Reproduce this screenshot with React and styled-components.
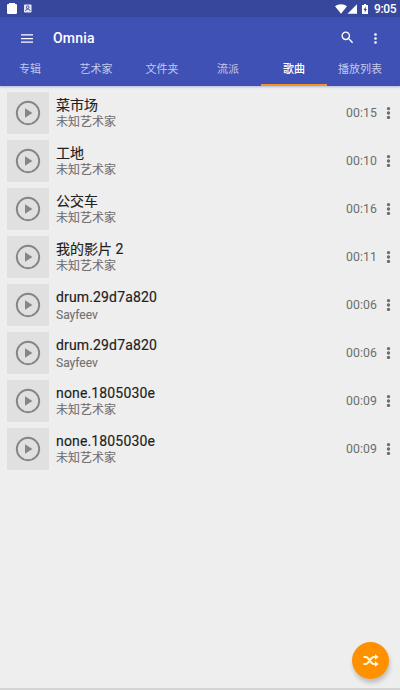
import React from 'react';
import styled, { createGlobalStyle } from 'styled-components';

const GlobalStyle = createGlobalStyle`
  * { box-sizing: border-box; }
  body { margin: 0; background: #eeeeee; font-family: Roboto, "Noto Sans CJK SC", sans-serif; }
  svg { display: block; flex: none; }
`;

const Screen = styled.div`
  width: 400px;
  height: 690px;
  display: flex;
  flex-direction: column;
  background: #eeeeee;
  overflow: hidden;
  border-bottom: 2px solid #d4d4d4;
`;

const StatusBar = styled.div`
  height: 17px;
  flex: none;
  display: flex;
  align-items: center;
  padding: 0 5px 0 7px;
  background: #37479b;
  color: #fff;
`;

const Notifications = styled.div`
  display: flex;
  align-items: center;
  gap: 7px;
  flex: 1;
`;

const Clock = styled.span`
  width: 21px;
  margin-left: 4px;
  font-size: 12px;
  font-weight: 500;
  letter-spacing: -0.35px;
  line-height: 17px;
  padding-top: 1px;
  white-space: nowrap;
`;

const Header = styled.header`
  height: 69px;
  flex: none;
  display: flex;
  flex-direction: column;
  background: #3f51b5;
  box-shadow: 0 1px 2px rgba(63, 81, 181, 0.35);
`;

const Toolbar = styled.div`
  height: 42px;
  display: flex;
  align-items: center;
  padding: 0 22px 0 21px;
  color: #fff;
`;

const AppTitle = styled.h1`
  flex: 1;
  margin: 0 0 0 20px;
  font-size: 14px;
  font-weight: 500;
  letter-spacing: 0.2px;
  line-height: 20px;
`;

const Actions = styled.div`
  display: flex;
  align-items: center;
  gap: 18px;
`;

const Tabs = styled.nav`
  height: 27px;
  display: flex;
  margin-left: -3px;
`;

const Tab = styled.div`
  width: 66px;
  flex: none;
  padding-top: 2px;
  text-align: center;
  font-size: 11px;
  line-height: 18px;
  font-weight: ${(p) => (p.$active ? 500 : 400)};
  color: ${(p) => (p.$active ? '#fff' : '#c3c9ec')};
  border-bottom: 2px solid ${(p) => (p.$active ? '#f39324' : 'transparent')};
`;

const List = styled.main`
  padding: 6px 8px 0 7px;
  display: flex;
  flex-direction: column;
  gap: 6px;
`;

const Row = styled.div`
  height: 42px;
  display: flex;
  align-items: center;
`;

const Artwork = styled.div`
  width: 42px;
  height: 42px;
  flex: none;
  display: grid;
  place-items: center;
  background: #e0e0e0;
`;

const Info = styled.div`
  flex: 1;
  margin-left: 7px;
  height: 42px;
  display: flex;
  flex-direction: column;
`;

const SongTitle = styled.div`
  margin-top: 4px;
  height: 18px;
  font-size: 14px;
  line-height: 18px;
  letter-spacing: ${(p) => (p.$latin ? '0.15px' : '0')};
  color: #212121;
  -webkit-text-stroke: 0.15px #212121;
  white-space: nowrap;
`;

const Artist = styled.div`
  margin-top: ${(p) => (p.$latin ? '1px' : '0')};
  height: 16px;
  font-size: 12px;
  line-height: 16px;
  color: #707070;
  -webkit-text-stroke: 0.1px #707070;
  white-space: nowrap;
`;

const Duration = styled.span`
  width: 32px;
  margin-right: 8px;
  text-align: right;
  font-size: 12.25px;
  letter-spacing: 0.1px;
  line-height: 16px;
  color: #6c6c6c;
`;

const Fab = styled.button`
  position: absolute;
  left: 352px;
  top: 642px;
  width: 37px;
  height: 37px;
  padding: 0;
  border: 0;
  border-radius: 50%;
  display: grid;
  place-items: center;
  background: #ff9100;
  box-shadow: 1px 4px 4px rgba(0, 0, 0, 0.2);
`;

const Dots = ({ w, h, r, gap, color }) => (
  <svg width={w} height={h} fill={color}>
    {[-gap, 0, gap].map((d) => (
      <circle key={d} cx={w / 2} cy={h / 2 + d} r={r} />
    ))}
  </svg>
);

const PlayIcon = () => (
  <svg width="26" height="26" viewBox="0 0 26 26">
    <circle cx="13" cy="13" r="11.2" fill="none" stroke="#858585" strokeWidth="1.9" />
    <path d="M10 8.2v9.6l7.4-4.8z" fill="#858585" />
  </svg>
);

const tabs = ['专辑', '艺术家', '文件夹', '流派', '歌曲', '播放列表'];

const songs = [
  ['菜市场', '未知艺术家', '00:15'],
  ['工地', '未知艺术家', '00:10'],
  ['公交车', '未知艺术家', '00:16'],
  ['我的影片 2', '未知艺术家', '00:11'],
  ['drum.29d7a820', 'Sayfeev', '00:06'],
  ['drum.29d7a820', 'Sayfeev', '00:06'],
  ['none.1805030e', '未知艺术家', '00:09'],
  ['none.1805030e', '未知艺术家', '00:09'],
];

const isLatin = (text) => /^[a-z]/i.test(text);

export default function App() {
  return (
    <Screen>
      <GlobalStyle />
      <StatusBar>
        <Notifications>
          <svg width="10" height="11" fill="#fff">
            <path d="M2 0h6v1h1.2l.8.8v8.4l-.8.8H.8l-.8-.8V1.8L.8 1H2z" />
          </svg>
          <svg width="8" height="9">
            <rect y="0.5" width="7.5" height="8" rx="0.8" fill="#e5e8f7" />
            <circle cx="3.7" cy="3.2" r="1.3" fill="none" stroke="#37479b" strokeWidth="0.9" />
            <path d="M1.5 7 2.5 5h2.3l1.4 2" fill="none" stroke="#37479b" strokeWidth="0.9" />
          </svg>
        </Notifications>
        <svg width="35" height="12" fill="#fff">
          <path d="M0 3.2C3.2.5 8.8.5 12 3.2L6 10.7z" />
          <path d="M22 1.2v9.5h-9.5z" />
          <path d="M29 1h2v1h2v9h-6V2h2z" />
          <path d="M30.7 3.4 28.5 7h1.3v2.6L32 6h-1.3z" fill="#37479b" />
        </svg>
        <Clock>9:05</Clock>
      </StatusBar>
      <Header>
        <Toolbar>
          <svg width="12" height="10" fill="#fff">
            <path d="M0 1.3h12v1.2H0zM0 5h12v1.2H0zM0 8.5h12v1.2H0z" />
          </svg>
          <AppTitle>Omnia</AppTitle>
          <Actions>
            <svg width="16" height="16" viewBox="-0.7 0.7 24 24" fill="#fff">
              <path d="M15.5 14h-.79l-.28-.27A6.47 6.47 0 0 0 16 9.5 6.5 6.5 0 1 0 9.5 16c1.61 0 3.09-.59 4.23-1.57l.27.28v.79l5 4.99L20.49 19l-4.99-5zm-6 0C7.01 14 5 11.99 5 9.5S7.01 5 9.5 5 14 7.01 14 9.5 11.99 14 9.5 14z" />
            </svg>
            <Dots w={5} h={13} r={1.3} gap={4} color="#fff" />
          </Actions>
        </Toolbar>
        <Tabs>
          {tabs.map((t) => (
            <Tab key={t} $active={t === '歌曲'}>{t}</Tab>
          ))}
        </Tabs>
      </Header>
      <List>
        {songs.map(([title, artist, time], i) => (
          <Row key={i}>
            <Artwork><PlayIcon /></Artwork>
            <Info>
              <SongTitle $latin={isLatin(title)}>{title}</SongTitle>
              <Artist $latin={isLatin(artist)}>{artist}</Artist>
            </Info>
            <Duration>{time}</Duration>
            <Dots w={7} h={14} r={1.65} gap={4.4} color="#6c6c6c" />
          </Row>
        ))}
      </List>
      <Fab aria-label="Shuffle">
        <svg width="16" height="13" viewBox="0 0 16 13" fill="none" stroke="#fff8d8" strokeWidth="2">
          <path d="M.5 3h2.3c1 0 1.7.5 2.3 1.3l3.3 4.4C9 9.5 9.7 10 10.7 10H13M.5 10h2.3c1 0 1.7-.5 2.3-1.3l3.3-4.4C9 3.5 9.7 3 10.7 3H13" />
          <path d="M12 .3 15.7 3 12 5.7zM12 7.3l3.7 2.7-3.7 2.7z" fill="#fff8d8" stroke="none" />
        </svg>
      </Fab>
    </Screen>
  );
}
